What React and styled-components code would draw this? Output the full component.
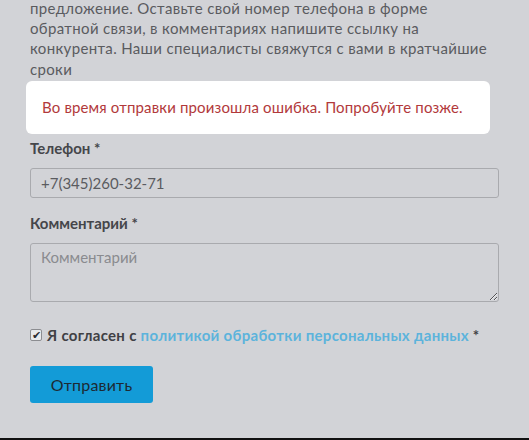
import React from "react";
import styled, { createGlobalStyle } from "styled-components";

const GlobalStyle = createGlobalStyle`
  html, body {
    margin: 0;
    padding: 0;
    background: #d2d3d7;
  }
  body {
    font-family: Lato, "Open Sans", "Noto Sans", sans-serif;
    color: #555;
  }
`;

const Page = styled.div`
  height: 438px;
  border-bottom: 2px solid #111;
  padding: 0 30px;
  box-sizing: content-box;
  overflow: hidden;
`;

const Intro = styled.p`
  margin: -2px 0 0;
  font-size: 15px;
  line-height: 20.2px;
  letter-spacing: 0.35px;
  color: #5a5b5f;
`;

const Notice = styled.div`
  margin: 2px 0 0 -4px;
  width: 464px;
  height: 53px;
  box-sizing: border-box;
  padding: 0 16px;
  display: flex;
  align-items: center;
  background: #fff;
  border-radius: 6px;
  color: #b2393b;
  font-size: 15px;
  letter-spacing: 0.15px;
`;

const Field = styled.div`
  display: flex;
  flex-direction: column;
  margin-top: ${(p) => p.$top || 0}px;
`;

const Label = styled.label`
  font-size: 15px;
  font-weight: 700;
  color: #45464a;
  line-height: 20px;
  margin-bottom: ${(p) => p.$gap || 10}px;
`;

const Input = styled.input`
  width: 469px;
  height: 30px;
  box-sizing: border-box;
  padding: 0 10px;
  border: 1px solid #a9aaae;
  border-radius: 3px;
  background: transparent;
  font-family: inherit;
  font-size: 15px;
  color: #5a5b5f;
  outline: none;
`;

const TextArea = styled.textarea`
  width: 469px;
  height: 59px;
  box-sizing: border-box;
  padding: 4px 10px;
  border: 1px solid #a9aaae;
  border-radius: 3px;
  background: transparent;
  font-family: inherit;
  font-size: 15px;
  color: #5a5b5f;
  outline: none;
  resize: vertical;
  &::placeholder {
    color: #8a8b8f;
  }
`;

const Agree = styled.label`
  display: flex;
  align-items: center;
  gap: 5px;
  margin-top: 24px;
  font-size: 15px;
  font-weight: 700;
  letter-spacing: 0.3px;
  color: #3f4044;
`;

const Check = styled.input`
  appearance: none;
  margin: 0;
  width: 12px;
  height: 12px;
  flex: none;
  border: 1px solid #8c8d91;
  border-radius: 2px;
  background: #e9e9eb;
  position: relative;
  &:checked::after {
    content: "✔";
    position: absolute;
    left: 1px;
    top: -3px;
    font-size: 11px;
    line-height: 16px;
    color: #2b2c30;
  }
`;

const Link = styled.a`
  color: #5cb3dc;
  text-decoration: none;
`;

const Submit = styled.button`
  margin-top: 22px;
  width: 123px;
  height: 37px;
  border: none;
  border-radius: 3px;
  background: #139bd7;
  color: #1d2a33;
  font-family: inherit;
  font-size: 16px;
  letter-spacing: 0.2px;
  cursor: pointer;
`;

export default function App() {
  return (
    <>
      <GlobalStyle />
      <Page>
        <Intro>
          предложение. Оставьте свой номер телефона в форме
          <br />
          обратной связи, в комментариях напишите ссылку на
          <br />
          конкурента. Наши специалисты свяжутся с вами в кратчайшие
          <br />
          сроки
        </Intro>
        <Notice>Во время отправки произошла ошибка. Попробуйте позже.</Notice>
        <Field $top={4}>
          <Label>Телефон *</Label>
          <Input defaultValue="+7(345)260-32-71" />
        </Field>
        <Field $top={15}>
          <Label>Комментарий *</Label>
          <TextArea placeholder="Комментарий" />
        </Field>
        <Agree>
          <Check type="checkbox" defaultChecked />
          <span>
            Я согласен с <Link href="#">политикой обработки персональных данных</Link> *
          </span>
        </Agree>
        <Submit type="button">Отправить</Submit>
      </Page>
    </>
  );
}
